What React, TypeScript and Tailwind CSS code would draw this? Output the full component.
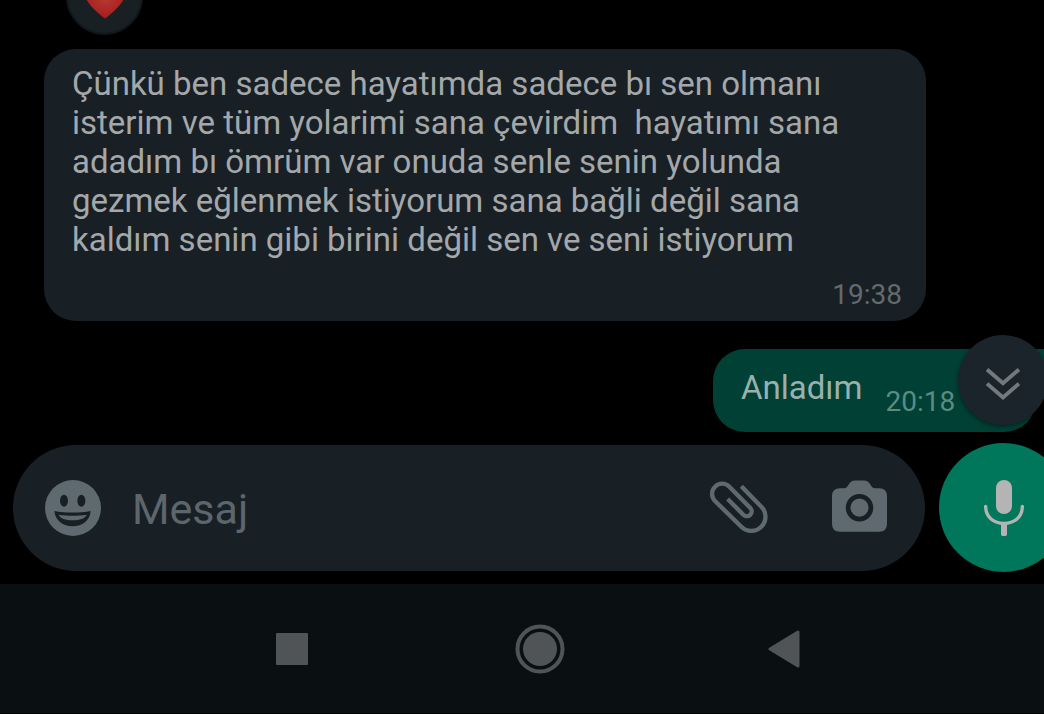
import React, { useState } from "react";

function HeartIcon() {
  return (
    <svg viewBox="0 0 44 40" className="mt-1 h-10 w-11" aria-hidden="true">
      <defs>
        <radialGradient id="heart" cx="50%" cy="45%" r="55%">
          <stop offset="0" stopColor="#b83a33" />
          <stop offset="1" stopColor="#a51d1d" />
        </radialGradient>
      </defs>
      <path
        d="M22 39.500C19 37.500 1 24 1 12.500C1 5 6 1 12 1C17 1 20.500 3.500 22 7C23.500 3.500 27 1 32 1C38 1 43 5 43 12.500C43 24 25 37.500 22 39.500Z"
        fill="url(#heart)"
      />
    </svg>
  );
}

function SmileIcon() {
  return (
    <svg viewBox="0 0 168 168" className="size-14" aria-hidden="true">
      <circle cx="84" cy="84" r="84" fill="#5f6a70" />
      <g fill="#182025">
        <ellipse cx="57" cy="62" rx="12" ry="18" />
        <ellipse cx="109" cy="62" rx="12" ry="18" />
        <path d="M28 93C60 99 106 99 137 93C135 122 112 139 83 139C54 139 31 122 28 93Z" />
      </g>
      <path d="M41 104C66 108 100 108 125 104C121 115 104 121 83 121C62 121 45 115 41 104Z" fill="#5f6a70" />
    </svg>
  );
}

function ClipIcon() {
  return (
    <svg viewBox="26 26 180 180" className="size-15" fill="none" stroke="#5f6a70" strokeWidth="13" aria-hidden="true">
      <path d="M123 51L183 112A42 42 0 0 1 123 172L44 95A30 30 0 0 1 87 52L150 116A14.500 14.500 0 0 1 129 136L82 89" />
    </svg>
  );
}

function CameraIcon() {
  return (
    <svg viewBox="0 0 164 154" className="mb-1 h-[52px] w-[55px]" aria-hidden="true">
      <path
        d="M24 24H36C42 24 46 20 50 13C55 4 60 1 68 1H96C104 1 109 4 114 13C118 20 122 24 128 24H140Q164 24 164 48V130Q164 154 140 154H24Q0 154 0 130V48Q0 24 24 24Z"
        fill="#5f6a70"
      />
      <circle cx="82" cy="82" r="34" fill="#5f6a70" stroke="#182025" strokeWidth="14" />
    </svg>
  );
}

function MicIcon() {
  return (
    <svg viewBox="0 0 120 168" className="h-14 w-10" aria-hidden="true">
      <rect x="36" y="0" width="48" height="102" rx="24" fill="#b4b4b4" />
      <path d="M5 79C5 112 30 130 60 130C90 130 115 112 115 79" fill="none" stroke="#b4b4b4" strokeWidth="10" strokeLinecap="round" />
      <path d="M51 128H69V163Q69 168 64 168H56Q51 168 51 163Z" fill="#b4b4b4" />
    </svg>
  );
}

function ChevronsIcon() {
  return (
    <svg viewBox="0 0 96 90" className="h-8 w-[34px]" fill="none" stroke="#727a7e" strokeWidth="11" aria-hidden="true">
      <path d="M3 4L48 43L93 4M3 44L48 83L93 44" />
    </svg>
  );
}

export default function App() {
  const [text, setText] = useState("");

  return (
    <div className="flex min-h-screen flex-col overflow-hidden bg-black font-['Roboto',sans-serif]">
      <main className="flex flex-col">
        <div className="flex h-[35px] items-end pl-[66px]">
          <div className="flex size-[77px] shrink-0 items-center justify-center rounded-full border-2 border-[#11171a] bg-[#182024]">
            <HeartIcon />
          </div>
        </div>

        <article className="mt-[14px] mr-[118px] ml-11 flex flex-col rounded-[32px] bg-[#182025] px-7 pt-[15px] pb-2">
          <p className="text-[33px] leading-[39px] whitespace-pre-wrap text-[#a4a8aa]">
            {"Çünkü ben sadece hayatımda sadece bı sen olmanı isterim ve tüm yolarimi sana çevirdim  hayatımı sana adadım bı ömrüm var onuda senle senin yolunda gezmek eğlenmek istiyorum sana bağli değil sana kaldım senin gibi birini değil sen ve seni istiyorum"}
          </p>
          <time className="-mr-1 mt-[18px] self-end text-[28px] leading-9 text-[#616a6f]">19:38</time>
        </article>

        <div className="relative mt-7 flex justify-end pr-2">
          <article className="relative flex h-[83px] w-[323px] items-start rounded-[32px] rounded-tr-none bg-[#004035] pl-7">
            <p className="mt-[19px] text-[33px] leading-[39px] text-[#9bb0ac]">Anladım</p>
            <time className="mt-[37px] ml-[23px] text-[28px] leading-8 text-[#5d8b82]">20:18</time>
            <span className="absolute top-0 -right-2 h-6 w-2 bg-[#004035]" />
          </article>
          <button
            type="button"
            aria-label="En alta in"
            className="absolute -top-[14px] -right-1 flex size-[90px] items-center justify-center rounded-full bg-[#1b242b] pt-2 shadow-[0_2px_4px_rgba(0,0,0,0.4)]"
          >
            <ChevronsIcon />
          </button>
        </div>
      </main>

      <form className="mt-[11px] -mr-6 mb-3 flex items-center gap-[14px] pl-[13px]" onSubmit={(e) => e.preventDefault()}>
        <div className="flex h-[126px] min-w-0 flex-1 items-center rounded-full bg-[#182025] pr-[38px] pl-8">
          <button type="button" aria-label="Emoji" className="shrink-0">
            <SmileIcon />
          </button>
          <input
            type="text"
            aria-label="Mesaj"
            placeholder="Mesaj"
            value={text}
            onChange={(e) => setText(e.target.value)}
            className="ml-[31px] min-w-0 flex-1 bg-transparent pt-1 text-[43px] text-[#a4a8aa] outline-none placeholder:text-[#5c666c]"
          />
          <button type="button" aria-label="Dosya ekle" className="mr-[63px] shrink-0">
            <ClipIcon />
          </button>
          <button type="button" aria-label="Kamera" className="shrink-0">
            <CameraIcon />
          </button>
        </div>
        <button
          type="button"
          aria-label="Sesli mesaj"
          className="flex size-[129px] shrink-0 items-center justify-center rounded-full bg-[#00775b]"
        >
          <MicIcon />
        </button>
      </form>

      <nav className="flex flex-1 items-center justify-center gap-[201px] border-b border-black bg-[#0a0f12] pl-7">
        <button type="button" aria-label="Son uygulamalar" className="flex w-11 justify-center">
          <span className="size-8 rounded-[1px] bg-[#505456]" />
        </button>
        <button type="button" aria-label="Ana ekran">
          <svg viewBox="0 0 50 50" className="size-[50px]" aria-hidden="true">
            <circle cx="25" cy="25" r="22.500" fill="none" stroke="#505456" strokeWidth="4" />
            <circle cx="25" cy="25" r="17" fill="#505456" />
          </svg>
        </button>
        <button type="button" aria-label="Geri" className="flex w-9 justify-center">
          <svg viewBox="0 0 32 38" className="h-[38px] w-8" aria-hidden="true">
            <path d="M2 19L30 2V36Z" fill="#505456" stroke="#505456" strokeWidth="3" strokeLinejoin="round" />
          </svg>
        </button>
      </nav>
    </div>
  );
}
